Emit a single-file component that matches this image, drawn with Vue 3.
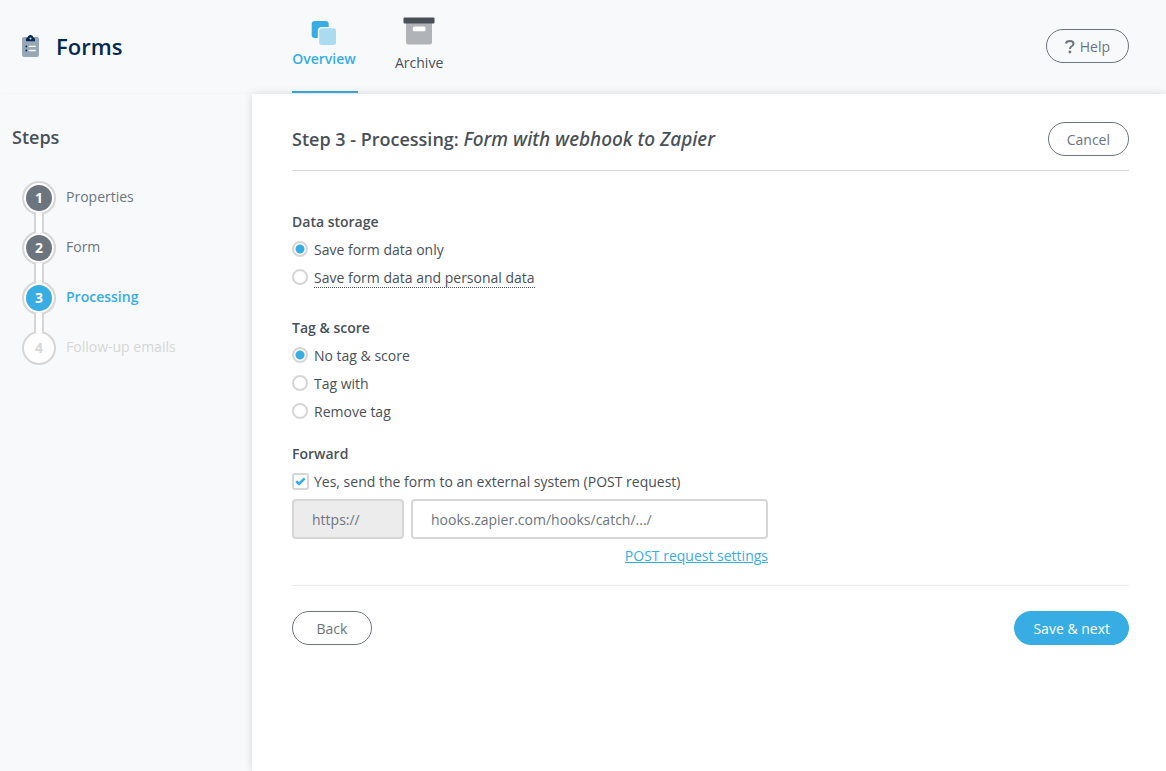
<!-- Form wizard, processing step -->
<template>
  <div class="page">
    <header class="header">
      <div class="brand">
        <svg class="brand-icon" width="17" height="22" viewBox="0 0 17 22">
          <rect x="0" y="2" width="17" height="20" rx="2" fill="#98a7b5" />
          <path d="M4 6.200V4.200Q4 3 5.600 2.600C5.900 1 7 0 8.500 0S11.100 1 11.400 2.600Q13 3 13 4.200V6.200Z" fill="#04284f" />
          <circle cx="8.500" cy="3.400" r="1" fill="#dfe5ea" />
          <circle cx="4.300" cy="11.400" r="0.900" fill="#04284f" />
          <circle cx="4.300" cy="15.500" r="0.900" fill="#04284f" />
          <path d="M7.300 11.400h6M7.300 15.500h6" stroke="#f3f6f8" stroke-width="1.400" stroke-linecap="round" />
        </svg>
        <span class="brand-name">Forms</span>
      </div>

      <nav class="tabs">
        <a href="#" class="tab active">
          <svg width="26" height="26" viewBox="0 0 26 26">
            <rect x="0.700" y="2" width="17" height="17" rx="3" fill="#37ade3" />
            <rect x="6.800" y="8" width="19" height="19" rx="4" fill="#f8f9fb" />
            <rect x="8.200" y="9.200" width="16.800" height="16.800" rx="2.500" fill="#aadbf1" />
          </svg>
          <span>Overview</span>
        </a>
        <a href="#" class="tab">
          <svg width="32" height="28" viewBox="0 0 32 28">
            <path d="M3 5h26v20a2.500 2.500 0 0 1-2.500 2.500h-21A2.500 2.500 0 0 1 3 25z" fill="#b0b4b9" />
            <rect x="0.500" y="0.500" width="31" height="6" rx="1" fill="#495057" />
            <rect x="9.800" y="9.600" width="12.700" height="4.600" rx="1.500" fill="#fff" />
          </svg>
          <span>Archive</span>
        </a>
      </nav>

      <button type="button" class="btn btn-help">
        <svg width="10" height="14" viewBox="0 0 10 14" fill="none" stroke="#6c757d">
          <path d="M1 3.500C1.300 1.900 2.700 1.100 4.800 1.100C7 1.100 8.500 2.100 8.500 3.800C8.500 5.200 7.600 5.800 6.400 6.500C5.400 7.100 4.900 7.500 4.900 9" stroke-width="2" />
          <circle cx="4.900" cy="12" r="1.400" fill="#6c757d" stroke="none" />
        </svg>
        <span>Help</span>
      </button>
    </header>

    <div class="body">
      <aside class="sidebar">
        <h2 class="sidebar-title">Steps</h2>
        <ol class="steps">
          <li v-for="(step, i) in steps" :key="step.label" class="step" :class="step.state">
            <div class="track">
              <span class="circle"><span class="number">{{ i + 1 }}</span></span>
              <span v-if="i < steps.length - 1" class="connector"></span>
            </div>
            <span class="step-label">{{ step.label }}</span>
          </li>
        </ol>
      </aside>

      <main class="main">
        <div class="title-row">
          <h1 class="title">Step 3 - Processing: <em>Form with webhook to Zapier</em></h1>
          <button type="button" class="btn">Cancel</button>
        </div>

        <form class="form" @submit.prevent>
          <fieldset class="group storage">
            <legend>Data storage</legend>
            <label v-for="o in storageOptions" :key="o.value" class="option">
              <input v-model="storage" type="radio" name="storage" :value="o.value" />
              <span :class="{ hint: o.hint }">{{ o.label }}</span>
            </label>
          </fieldset>

          <fieldset class="group tagging">
            <legend>Tag &amp; score</legend>
            <label v-for="o in tagOptions" :key="o.value" class="option">
              <input v-model="tag" type="radio" name="tag" :value="o.value" />
              <span>{{ o.label }}</span>
            </label>
          </fieldset>

          <fieldset class="group forward">
            <legend>Forward</legend>
            <label class="option">
              <span class="check">
                <input v-model="forward" type="checkbox" />
                <svg v-if="forward" width="11" height="9" viewBox="0 0 11 9">
                  <path d="M1.200 4.300L4 7L9.700 1.300" fill="none" stroke="#37ade3" stroke-width="2.600" />
                </svg>
              </span>
              <span>Yes, send the form to an external system (POST request)</span>
            </label>
            <div class="url">
              <input class="field protocol" type="text" value="https://" aria-label="Protocol" readonly />
              <input v-model="url" class="field" type="text" aria-label="Webhook address" />
            </div>
            <a href="#" class="settings">POST request settings</a>
          </fieldset>

          <div class="actions">
            <button type="button" class="btn btn-back">Back</button>
            <button type="submit" class="btn btn-primary">Save &amp; next</button>
          </div>
        </form>
      </main>
    </div>
  </div>
</template>

<script setup>
import { ref } from "vue";

const steps = [
  { label: "Properties", state: "done" },
  { label: "Form", state: "done" },
  { label: "Processing", state: "current" },
  { label: "Follow-up emails", state: "todo" },
];

const storageOptions = [
  { value: "form", label: "Save form data only" },
  { value: "personal", label: "Save form data and personal data", hint: true },
];

const tagOptions = [
  { value: "none", label: "No tag & score" },
  { value: "add", label: "Tag with" },
  { value: "remove", label: "Remove tag" },
];

const storage = ref("form");
const tag = ref("none");
const forward = ref(true);
const url = ref("hooks.zapier.com/hooks/catch/.../");
</script>

<style>
body {
  margin: 0;
  background: #f8f9fb;
}
</style>

<style scoped>
.page {
  display: flex;
  flex-direction: column;
  min-height: 100vh;
  font-family: "Open Sans", sans-serif;
  font-size: 14px;
  line-height: 28px;
  color: #495057;
  background: #f8f9fb;
}

/* header */
.header {
  display: flex;
  align-items: center;
  box-sizing: border-box;
  height: 94px;
  padding: 0 37px 2px 0;
}
.brand {
  display: flex;
  align-items: center;
  box-sizing: border-box;
  width: 292px;
  padding-left: 22px;
  gap: 17px;
}
.brand-name {
  font-size: 22px;
  font-weight: 600;
  color: #04284f;
}
.tabs {
  display: flex;
  flex: 1;
  align-self: stretch;
  gap: 37px;
}
.tab {
  display: flex;
  flex-direction: column;
  align-items: center;
  box-sizing: border-box;
  height: 93px;
  padding-top: 17px;
  gap: 4px;
  color: #495057;
  text-decoration: none;
}
.tab.active {
  width: 66px;
  padding: 19px 2px 0 0;
  gap: 0;
  font-weight: 600;
  color: #37ade3;
  border-bottom: 2px solid #37ade3;
}
.tab svg {
  flex: none;
}

/* buttons */
.btn {
  display: inline-flex;
  align-items: center;
  justify-content: center;
  box-sizing: border-box;
  height: 34px;
  padding: 1px 18px 0;
  font: inherit;
  color: #6c757d;
  background: transparent;
  border: 1px solid #6c757d;
  border-radius: 17px;
  cursor: pointer;
}
.btn-help {
  gap: 5px;
}
.btn-back {
  min-width: 80px;
}
.btn-primary {
  color: #fff;
  background: #37ade3;
  border-color: #37ade3;
}

.body {
  display: flex;
  flex: 1;
}

/* steps */
.sidebar {
  box-sizing: border-box;
  width: 252px;
  padding: 29px 12px;
  box-shadow: 0 -1px 3px -2px rgba(0, 0, 0, 0.1);
}
.sidebar-title {
  margin: 0;
  font-size: 18px;
  font-weight: 600;
}
.steps {
  margin: 30px 0 0;
  padding: 0 0 0 10px;
  list-style: none;
}
.step {
  display: flex;
  gap: 10px;
  height: 50px;
  color: #6c757d;
}
.track {
  display: flex;
  flex-direction: column;
  align-items: center;
}
.circle {
  display: flex;
  flex: none;
  box-sizing: border-box;
  width: 34px;
  height: 34px;
  padding: 2px;
  background: #fff;
  border: 2px solid #d6d6d6;
  border-radius: 50%;
}
.number {
  flex: 1;
  line-height: 26px;
  font-weight: 700;
  text-align: center;
  color: #fff;
  background: #6c757d;
  border-radius: 50%;
}
.connector {
  position: relative;
  box-sizing: border-box;
  flex: none;
  width: 10px;
  height: 20px;
  margin: -2px 0;
  background: #fff;
  border: solid #d6d6d6;
  border-width: 0 2px;
  z-index: 1;
}
.step-label {
  line-height: 32px;
}
.current .step-label {
  font-weight: 600;
  color: #37ade3;
}
.current .number {
  background: #37ade3;
}
.todo .step-label {
  color: #d6d6d6;
}
.todo .number {
  color: #d6d6d6;
  background: #fff;
}

/* content */
.main {
  flex: 1;
  padding: 28px 37px 28px 40px;
  background: #fff;
  box-shadow: 0 0 8px rgba(0, 0, 0, 0.14);
}
.title-row {
  display: flex;
  align-items: center;
  justify-content: space-between;
  padding-bottom: 14px;
  border-bottom: 1px solid #d6d6d6;
}
.title {
  margin: 0;
  font-size: 18px;
  font-weight: 600;
}
.title em {
  font-family: "Noto Sans", "Open Sans", sans-serif;
  font-size: 19px;
  font-weight: 500;
}
.form {
  padding-top: 37px;
}
.group {
  min-width: 0;
  margin: 0;
  padding: 0;
  border: 0;
}
.group legend {
  padding: 0;
  font-weight: 600;
}
.storage {
  margin-bottom: 22px;
}
.tagging {
  margin-bottom: 14px;
}
.option {
  display: flex;
  align-items: center;
  width: fit-content;
  height: 28px;
  gap: 6px;
}
.option input {
  appearance: none;
  box-sizing: border-box;
  width: 16px;
  height: 16px;
  margin: 0 0 2px;
  background: #fff;
  border: 2px solid #d6d6d6;
  border-radius: 50%;
}
.option input[type="radio"]:checked {
  background: radial-gradient(circle, #37ade3 4px, #fff 5px);
}
.check {
  display: grid;
  place-items: center;
  margin: 0 -1px 2px 0;
}
.check input,
.check svg {
  grid-area: 1 / 1;
}
.check svg {
  pointer-events: none;
  z-index: 1;
}
.option .check input {
  width: 17px;
  height: 17px;
  margin: 0;
  border-radius: 3px;
}
.hint {
  line-height: 18px;
  border-bottom: 1px dotted #495057;
}
.forward {
  display: flex;
  flex-direction: column;
  max-width: 476px;
}
.url {
  display: flex;
  gap: 7px;
  margin: 3px 0;
}
.field {
  flex: 1;
  box-sizing: border-box;
  min-width: 0;
  height: 40px;
  padding: 0 18px;
  font: inherit;
  color: #6c757d;
  background: #fff;
  border: 2px solid #d6d6d6;
  border-radius: 4px;
}
.protocol {
  flex: 0 0 112px;
  background: #ececec;
}
.settings {
  align-self: flex-end;
  color: #37ade3;
}
.actions {
  display: flex;
  justify-content: space-between;
  margin-top: 15px;
  padding-top: 25px;
  border-top: 1px solid #ececec;
}
</style>
